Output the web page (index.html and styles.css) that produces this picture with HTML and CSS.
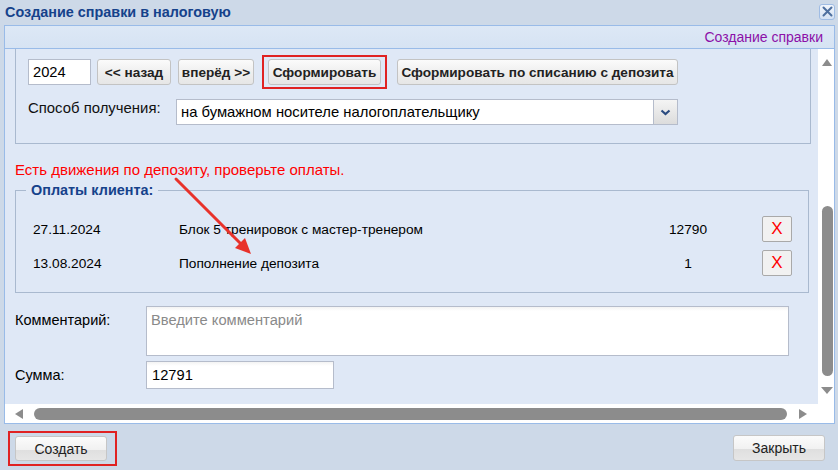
FILE: index.html
```html
<!DOCTYPE html>
<html lang="ru">
<head>
<meta charset="utf-8">
<title>Создание справки в налоговую</title>
<link rel="stylesheet" href="styles.css">
</head>
<body>
<div class="window">
  <div class="titlebar">
    <span class="title">Создание справки в налоговую</span>
    <span class="close-btn">
      <svg width="11" height="11" viewBox="0 0 11 11"><path d="M1.5 1.5 L9.5 9.5 M9.5 1.5 L1.5 9.5" stroke="#4d6f9f" stroke-width="2" stroke-linecap="round"/></svg>
    </span>
  </div>

  <div class="panel">
    <div class="panel-header"><span class="panel-caption">Создание справки</span></div>

    <div class="panel-main">
      <div class="viewport">
        <div class="params">
          <div class="params-row">
            <div class="field year">2024</div>
            <button class="btn btn-back">&lt;&lt; назад</button>
            <button class="btn btn-fwd">вперёд &gt;&gt;</button>
            <div class="highlight highlight-top"><button class="btn btn-make">Сформировать</button></div>
            <button class="btn btn-deposit">Сформировать по списанию с депозита</button>
          </div>
          <div class="params-row params-row-select">
            <span class="label-way">Способ получения:</span>
            <div class="combo">
              <span class="combo-text">на бумажном носителе налогоплательщику</span>
              <span class="combo-trigger">
                <svg width="11" height="7" viewBox="0 0 11 7"><path d="M1.5 1.5 L5.5 5 L9.5 1.5" fill="none" stroke="#2b4b80" stroke-width="2.2"/></svg>
              </span>
            </div>
          </div>
        </div>

        <div class="warning">Есть движения по депозиту, проверьте оплаты.</div>

        <div class="group">
          <div class="group-head">
            <span class="gline gline-start"></span>
            <span class="group-title">Оплаты клиента:</span>
            <span class="gline gline-end"></span>
          </div>
          <div class="group-body">
            <div class="pay-row">
              <span class="pay-date">27.11.2024</span>
              <span class="pay-name">Блок 5 тренировок с мастер-тренером</span>
              <span class="pay-sum">12790</span>
              <button class="btn-del">X</button>
            </div>
            <div class="pay-row">
              <span class="pay-date">13.08.2024</span>
              <span class="pay-name">Пополнение депозита</span>
              <span class="pay-sum">1</span>
              <button class="btn-del">X</button>
            </div>
          </div>
        </div>

        <div class="form-row">
          <span class="form-label">Комментарий:</span>
          <div class="field textarea placeholder">Введите комментарий</div>
        </div>
        <div class="form-row form-row-sum">
          <span class="form-label">Сумма:</span>
          <div class="field sum">12791</div>
        </div>

        <svg class="pointer" width="260" height="215" viewBox="0 0 260 215">
          <line x1="171" y1="130" x2="238" y2="197" stroke="#e8322b" stroke-width="3" stroke-linecap="round"/>
          <polygon points="246,205 230,199 240,189" fill="#e8322b"/>
        </svg>
      </div>

      <div class="vscroll">
        <span class="arrow-up"></span>
        <span class="vtrack"><span class="vthumb"></span></span>
        <span class="arrow-down"></span>
      </div>
    </div>

    <div class="hscroll">
      <span class="arrow-left"></span>
      <span class="hthumb"></span>
      <span class="arrow-right"></span>
    </div>
  </div>

  <div class="footer">
    <div class="highlight highlight-create"><button class="btn-foot">Создать</button></div>
    <button class="btn-foot btn-close">Закрыть</button>
  </div>
</div>
</body>
</html>
```

FILE: styles.css
```css
* { box-sizing: border-box; }

html, body {
  margin: 0;
  padding: 0;
}

body {
  font-family: "Liberation Sans", Arial, sans-serif;
  font-size: 14px;
  color: #111;
}

.window {
  width: 838px;
  height: 470px;
  background: #cdd9e8;
  display: flex;
  flex-direction: column;
  overflow: hidden;
}

/* title bar */
.titlebar {
  height: 25px;
  display: flex;
  align-items: center;
  justify-content: space-between;
  padding: 0 3px 2px 5px;
}

.title {
  font-weight: bold;
  font-size: 14.4px;
  color: #15428b;
}

.close-btn {
  width: 16px;
  height: 16px;
  border: 1px solid #9fbce4;
  border-radius: 3px;
  background: linear-gradient(#f2f6fc, #d3e1f3);
  display: flex;
  align-items: center;
  justify-content: center;
}

/* panel */
.panel {
  margin: 0 3px 0 4px;
  border: 1px solid #99bbe8;
  display: flex;
  flex-direction: column;
}

.panel-header {
  height: 23px;
  border-bottom: 1px solid #99bbe8;
  background: linear-gradient(#dde8f6, #d6e3f3);
  display: flex;
  align-items: center;
  justify-content: flex-end;
  padding-right: 11px;
}

.panel-caption {
  color: #8c10a8;
  font-size: 14px;
}

.panel-main {
  display: flex;
  height: 355px;
}

.viewport {
  position: relative;
  flex: 1;
  background: #dfe8f6;
  overflow: hidden;
}

/* top parameters block (scrolled, top edge hidden) */
.params {
  margin: 0 7px 0 10px;
  border: 1px solid #a9b9cf;
  border-top: none;
  padding: 10px 12px 18px 12px;
}

.params-row {
  display: flex;
  align-items: center;
  height: 26px;
}

.params-row-select {
  margin-top: 14px;
}

.field {
  background: #fff;
  border: 1px solid #b5bccb;
  font-size: 14.7px;
  color: #000;
}

.year {
  width: 63px;
  height: 26px;
  line-height: 24px;
  padding-left: 4px;
}

.btn {
  height: 26px;
  font-family: inherit;
  font-size: 13.6px;
  font-weight: bold;
  color: #222;
  border: 1px solid #c3c3c3;
  border-radius: 3px;
  background: linear-gradient(#fbfbfb 0%, #efefef 50%, #e6e6e6 100%);
  padding: 0;
  margin: 0 0 0 6px;
  white-space: nowrap;
}

.btn-back { width: 74px; }
.btn-fwd { margin-left: 7px; width: 76px; }

.highlight {
  border: 2px solid #e02222;
}

.highlight-top {
  margin-left: 8px;
  padding: 2px 4px;
}

.highlight-top .btn {
  margin: 0;
}

.btn-make { width: 113px; }

.btn-deposit {
  margin-left: 10px;
  width: 281px;
}

.label-way {
  width: 148px;
  align-self: flex-start;
  padding-top: 1px;
  font-size: 14.9px;
}

.combo {
  width: 502px;
  height: 26px;
  background: #fff;
  border: 1px solid #b5bccb;
  display: flex;
  align-items: center;
}

.combo-text {
  flex: 1;
  padding-left: 4px;
  color: #000;
  font-size: 14.8px;
}

.combo-trigger {
  width: 24px;
  height: 24px;
  border-left: 1px solid #b5bccb;
  background: linear-gradient(#f4f4f4, #dcdcdc);
  display: flex;
  align-items: center;
  justify-content: center;
}

/* warning */
.warning {
  margin: 17px 0 0 10px;
  height: 18px;
  line-height: 18px;
  color: #ff0000;
  font-size: 15px;
}

/* payments group */
.group {
  margin: 3px 9px 0 10px;
}

.group-head {
  display: flex;
  height: 16px;
}

.gline {
  align-self: flex-end;
  height: 8px;
  border-top: 1px solid #a9b9cf;
}

.gline-start {
  width: 11px;
  border-left: 1px solid #a9b9cf;
}

.gline-end {
  flex: 1;
  border-right: 1px solid #a9b9cf;
}

.group-title {
  padding: 0 5px;
  font-weight: bold;
  font-size: 14.4px;
  color: #15428b;
  line-height: 16px;
}

.group-body {
  border: 1px solid #a9b9cf;
  border-top: none;
  padding: 14px 0 12px 17px;
}

.pay-row {
  display: flex;
  align-items: center;
  height: 34px;
  font-size: 13.7px;
  color: #000;
}

.pay-date { width: 146px; }
.pay-name { width: 469px; }
.pay-sum { width: 80px; text-align: center; }

.btn-del {
  margin-left: 34px;
  width: 30px;
  height: 26px;
  border: 1px solid #a9a9a9;
  border-radius: 2px;
  background: #f1f1f1;
  color: #ff0000;
  font-family: inherit;
  font-size: 17px;
  padding: 0;
}

/* form fields */
.form-row {
  display: flex;
  margin: 13px 0 0 10px;
}

.form-row-sum {
  margin-top: 5px;
  align-items: center;
}

.form-label {
  width: 131px;
  color: #000;
  font-size: 14.5px;
}

.form-row:not(.form-row-sum) .form-label {
  padding-top: 6px;
}

.textarea {
  width: 643px;
  height: 50px;
  padding: 5px 0 0 4px;
  background: linear-gradient(#f3f3f3 0, #fff 4px);
}

.placeholder { color: #8a8a8a; }

.sum {
  width: 188px;
  height: 28px;
  line-height: 26px;
  padding-left: 5px;
  background: linear-gradient(#f3f3f3 0, #fff 4px);
}

.pointer {
  position: absolute;
  left: 0;
  top: 0;
  pointer-events: none;
}

/* scrollbars */
.vscroll {
  width: 16px;
  background: #fff;
  display: flex;
  flex-direction: column;
  align-items: center;
  padding: 10px 0 10px 2px;
}

.arrow-up {
  width: 0;
  height: 0;
  border-left: 5px solid transparent;
  border-right: 5px solid transparent;
  border-bottom: 7px solid #8c8c8c;
}

.vtrack {
  flex: 1;
  width: 11px;
  display: flex;
  flex-direction: column;
  justify-content: flex-end;
  padding-bottom: 11px;
}

.vthumb {
  height: 170px;
  border-radius: 6px;
  background: #8c8c8c;
}

.arrow-down {
  width: 0;
  height: 0;
  border-left: 6px solid transparent;
  border-right: 6px solid transparent;
  border-top: 7px solid #8c8c8c;
}

.hscroll {
  height: 19px;
  background: #fff;
  display: flex;
  align-items: center;
  padding: 0 0 0 10px;
}

.arrow-left {
  width: 0;
  height: 0;
  border-top: 5px solid transparent;
  border-bottom: 5px solid transparent;
  border-right: 8px solid #8c8c8c;
}

.hthumb {
  margin-left: 11px;
  width: 753px;
  height: 12px;
  border-radius: 6px;
  background: #8c8c8c;
}

.arrow-right {
  margin-left: 12px;
  width: 0;
  height: 0;
  border-top: 5px solid transparent;
  border-bottom: 5px solid transparent;
  border-left: 8px solid #8c8c8c;
}

/* footer */
.footer {
  flex: 1;
  display: flex;
  justify-content: space-between;
  align-items: flex-start;
  padding: 7px 13px 0 8px;
}

.highlight-create {
  padding: 3px 8px 3px 5px;
}

.btn-foot {
  width: 92px;
  height: 25px;
  font-family: inherit;
  font-size: 14px;
  color: #222;
  border: 1px solid #c6c6c6;
  border-radius: 3px;
  background: linear-gradient(#fbfbfb 0%, #f1f1f1 55%, #dfdfdf 56%, #e6e6e6 100%);
  padding: 0;
}

.btn-close {
  margin-top: 4px;
  height: 26px;
}
```
